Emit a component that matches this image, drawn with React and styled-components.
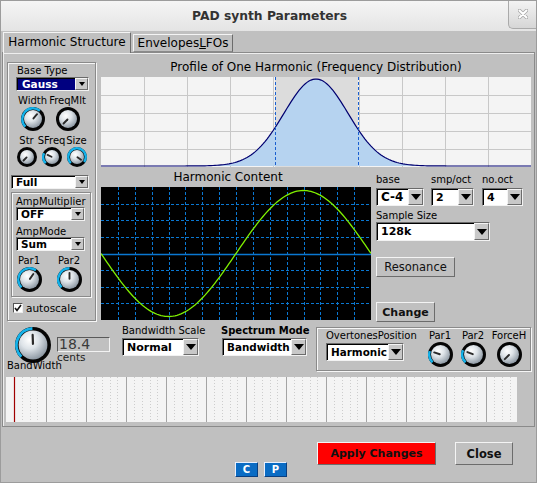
import React, { useId } from "react";
import styled, { createGlobalStyle } from "styled-components";

const GlobalStyle = createGlobalStyle`
  html, body { margin: 0; padding: 0; background: #c0c0c0; }
  body { font-family: "DejaVu Sans", "Liberation Sans", sans-serif; color: #000; }
  * { box-sizing: border-box; }
`;

const raised = `
  border: 1px solid;
  border-color: #f4f4f4 #6c6c6c #6c6c6c #f4f4f4;
`;

const engraved = `
  border: 1px solid #8a8a8a;
  box-shadow: inset 1px 1px 0 #f6f6f6, 1px 1px 0 #f6f6f6;
`;

const Window = styled.div`
  width: 537px;
  height: 483px;
  border: 1px solid #9c9c9c;
  background: #c0c0c0;
  display: flex;
  flex-direction: column;
  overflow: hidden;
`;

const TitleBar = styled.div`
  height: 30px;
  flex: none;
  display: grid;
  grid-template-columns: 1fr auto 1fr;
  align-items: center;
  background: linear-gradient(#f5f5f5, #e4e4e4);
`;

const Title = styled.div`
  grid-column: 2;
  font-weight: bold;
  font-size: 12.3px;
  color: #333;
  padding-left: 2px;
`;

const CloseBtn = styled.div`
  grid-column: 3;
  justify-self: end;
  align-self: start;
  width: 28px;
  height: 29px;
  margin-top: -1px;
  border-left: 1px solid #aaa;
  border-bottom: 1px solid #aaa;
  border-bottom-left-radius: 5px;
  background: linear-gradient(#f4f4f4, #d6d6d6);
  display: flex;
  align-items: center;
  justify-content: center;
`;

const Body = styled.div`
  flex: 1;
  display: flex;
  flex-direction: column;
  padding-top: 1px;
`;

const TabRow = styled.div`
  height: 20px;
  display: flex;
  align-items: flex-end;
  gap: 2px;
  padding-left: 2px;
`;

const Tab = styled.div`
  position: relative;
  z-index: 1;
  width: ${(p) => p.$w}px;
  height: ${(p) => (p.$active ? 21 : 18)}px;
  margin-bottom: ${(p) => (p.$active ? -1 : 0)}px;
  background: #c0c0c0;
  border-top: 1px solid #f4f4f4;
  border-left: 1px solid #f4f4f4;
  border-right: 1px solid #6c6c6c;
  border-bottom: ${(p) => (p.$active ? "none" : "1px solid #8a8a8a")};
  font-size: 12px;
  line-height: ${(p) => (p.$active ? 19 : 16)}px;
  text-align: center;
  white-space: nowrap;
`;

const Panel = styled.div`
  width: 533px;
  height: 375px;
  margin-left: 1px;
  border: 1px solid #8a8a8a;
  box-shadow: inset 1px 1px 0 #eee;
  padding: 4px 3px 0 4px;
  display: flex;
  flex-direction: column;
`;

const TopArea = styled.div`
  display: flex;
  height: 265px;
`;

const LeftGroup = styled.div`
  ${engraved}
  margin-top: 5px;
  width: 89px;
  height: 259px;
  display: flex;
  flex-direction: column;
`;

const SmallLabel = styled.div`
  font-size: 10px;
  line-height: 12px;
  white-space: nowrap;
  font-weight: ${(p) => (p.$bold ? "bold" : "normal")};
  margin-top: ${(p) => p.$mt || 0}px;
  margin-left: ${(p) => p.$ml || 0}px;
`;

const DropBox = styled.div`
  display: flex;
  flex: none;
  width: ${(p) => p.$w}px;
  height: ${(p) => p.$h}px;
  margin-top: ${(p) => p.$mt || 0}px;
  margin-left: ${(p) => p.$ml || 0}px;
  border: 1px solid;
  border-color: #6a6a6a #f2f2f2 #f2f2f2 #6a6a6a;
  background: #fff;
`;

const DropField = styled.div`
  flex: 1;
  min-width: 0;
  overflow: hidden;
  white-space: nowrap;
  border-top: 1px solid #000;
  border-left: 1px solid #000;
  background: ${(p) => (p.$selected ? "#000080" : "#fff")};
  color: ${(p) => (p.$selected ? "#fff" : "#000")};
  font-weight: bold;
  font-size: ${(p) => p.$fs}px;
  line-height: ${(p) => p.$h - 3}px;
  padding-left: ${(p) => (p.$selected ? 4 : 3)}px;
`;

const DropArrow = styled.div`
  width: ${(p) => p.$aw}px;
  flex: none;
  ${raised}
  background: #c8c8c8;
  display: flex;
  align-items: center;
  justify-content: center;
`;

const Triangle = styled.div`
  width: 0;
  height: 0;
  border-left: ${(p) => p.$s}px solid transparent;
  border-right: ${(p) => p.$s}px solid transparent;
  border-top: ${(p) => p.$s + 1}px solid #000;
`;

const KnobRow = styled.div`
  display: flex;
  margin-top: ${(p) => p.$mt || 0}px;
  padding-left: ${(p) => p.$pl || 0}px;
  gap: ${(p) => p.$gap || 0}px;
`;

const KnobCellBox = styled.div`
  width: ${(p) => p.$w}px;
  margin-left: ${(p) => p.$ml || 0}px;
  flex: none;
  display: flex;
  flex-direction: column;
  align-items: center;
`;

const KnobLabel = styled.div`
  font-size: 10px;
  line-height: 12px;
  white-space: nowrap;
`;

const AmpGroup = styled.div`
  ${engraved}
  margin-top: 3px;
  margin-left: 3px;
  width: 80px;
  height: 105px;
  display: flex;
  flex-direction: column;
`;

const CheckRow = styled.div`
  display: flex;
  align-items: center;
  margin-top: 5px;
  margin-left: 5px;
  height: 12px;
  font-size: 10.5px;
  gap: 3px;
`;

const CheckBox = styled.div`
  width: 10px;
  height: 10px;
  background: #fff;
  border: 1px solid;
  border-color: #555 #eee #eee #555;
  display: flex;
  align-items: center;
  justify-content: center;
`;

const RightArea = styled.div`
  margin-left: 5px;
  width: 430px;
  display: flex;
  flex-direction: column;
`;

const PlotTitle = styled.div`
  height: 20px;
  line-height: 20px;
  font-size: 12px;
  text-align: center;
  white-space: nowrap;
  padding-right: ${(p) => p.$pr || 0}px;
`;

const Svg = styled.svg`
  display: block;
  flex: none;
`;

const LowerRow = styled.div`
  display: flex;
`;

const ScopeCol = styled.div`
  width: 270px;
  display: flex;
  flex-direction: column;
`;

const Controls = styled.div`
  width: 155px;
  margin-left: 5px;
  display: flex;
  flex-direction: column;
`;

const OctRow = styled.div`
  display: flex;
  margin-top: 7px;
`;

const Field = styled.div`
  display: flex;
  flex-direction: column;
  width: ${(p) => p.$w}px;
  margin-left: ${(p) => p.$ml || 0}px;
  margin-top: ${(p) => p.$mt || 0}px;
  flex: none;
`;

const Button = styled.div`
  ${raised}
  width: ${(p) => p.$w}px;
  height: ${(p) => p.$h}px;
  margin-top: ${(p) => p.$mt || 0}px;
  margin-left: ${(p) => p.$ml || 0}px;
  background: ${(p) => p.$bg || "#c0c0c0"};
  font-size: ${(p) => p.$fs || 11}px;
  font-weight: ${(p) => (p.$bold ? "bold" : "normal")};
  color: ${(p) => p.$color || "#111"};
  display: flex;
  align-items: center;
  justify-content: center;
  white-space: nowrap;
  flex: none;
`;

const BottomRow = styled.div`
  display: flex;
  align-items: flex-start;
  height: 52px;
`;

const BWBlock = styled.div`
  display: grid;
  grid-template-columns: 52px 51px;
`;

const BWKnob = styled.div`
  justify-self: center;
  margin-top: 5px;
`;

const ValueCol = styled.div`
  margin-top: 15px;
  margin-left: -2px;
  width: 53px;
  display: flex;
  flex-direction: column;
`;

const ValueBox = styled.div`
  width: 53px;
  height: 15px;
  border: 1px solid;
  border-color: #5a5a5a #f2f2f2 #f2f2f2 #5a5a5a;
  font-size: 14px;
  line-height: 13px;
  color: #3a3a3a;
  padding-left: 1px;
`;

const Cents = styled.div`
  font-size: 10.5px;
  line-height: 11px;
  color: #222;
`;

const BWLabel = styled.div`
  grid-column: 1 / span 2;
  margin-top: -3px;
  font-size: 10px;
  line-height: 12px;
`;

const OvtGroup = styled.div`
  ${engraved}
  margin-left: 8px;
  margin-top: 5px;
  width: 215px;
  height: 44px;
  display: flex;
  align-items: flex-start;
  padding: 2px 0 0 9px;
`;

const Spectrum = styled.div`
  margin-top: 3px;
  margin-left: -1px;
`;

const Footer = styled.div`
  display: flex;
  align-items: flex-start;
  padding: 15px 0 0 234px;
`;

const CPGroup = styled.div`
  display: flex;
  gap: 6px;
  margin-top: 20px;
`;

const CPButton = styled.div`
  width: 23px;
  height: 15px;
  border: 1px solid;
  border-color: #e8f0ff #0a3f80 #0a3f80 #e8f0ff;
  background: #0a6cc4;
  color: #fff;
  font-weight: bold;
  font-size: 10px;
  display: flex;
  align-items: center;
  justify-content: center;
`;

const polar = (c, r, deg) => {
  const a = ((deg - 90) * Math.PI) / 180;
  return [c + r * Math.cos(a), c + r * Math.sin(a)];
};

function Knob({ size, angle }) {
  const gid = useId().replace(/:/g, "");
  const c = size / 2;
  const ring = size > 30 ? 3.6 : 3;
  const ra = c - ring * 0.42;
  const ri = c - ring;
  const [sx, sy] = polar(c, ra, -135);
  const [ex, ey] = polar(c, ra, angle);
  const large = angle + 135 > 180 ? 1 : 0;
  const [x1, y1] = polar(c, ri * 0.08, angle);
  const [x2, y2] = polar(c, ri * 0.7, angle);
  return (
    <Svg width={size} height={size} viewBox={`0 0 ${size} ${size}`}>
      <defs>
        <radialGradient id={gid} cx="38%" cy="32%" r="70%">
          <stop offset="0" stopColor="#ffffff" />
          <stop offset="0.45" stopColor="#dde3e8" />
          <stop offset="1" stopColor="#8e99a4" />
        </radialGradient>
      </defs>
      <circle cx={c} cy={c} r={c} fill="#050505" />
      {angle > -135 && (
        <path
          d={`M${sx} ${sy} A${ra} ${ra} 0 ${large} 1 ${ex} ${ey}`}
          stroke="#14b2ea"
          strokeWidth={ring * 0.8}
          fill="none"
        />
      )}
      <circle cx={c} cy={c} r={ri} fill={`url(#${gid})`} />
      <line x1={x1} y1={y1} x2={x2} y2={y2} stroke="#2a2a2a" strokeWidth={size > 30 ? 2.2 : 1.9} strokeLinecap="round" />
    </Svg>
  );
}

function KnobCell({ label, w, size, angle, ml }) {
  return (
    <KnobCellBox $w={w} $ml={ml}>
      <KnobLabel>{label}</KnobLabel>
      <Knob size={size} angle={angle} />
    </KnobCellBox>
  );
}

function Dropdown({ text, w, h, fs, selected, mt, ml, aw = 15 }) {
  return (
    <DropBox $w={w} $h={h} $mt={mt} $ml={ml}>
      <DropField $selected={selected} $fs={fs} $h={h}>
        {text}
      </DropField>
      <DropArrow $aw={h < 16 ? 13 : aw}>
        <Triangle $s={h < 16 ? 3.5 : 5} />
      </DropArrow>
    </DropBox>
  );
}

function ProfilePlot() {
  const W = 430;
  const H = 90;
  const pts = [];
  for (let x = 0; x <= W; x += 2) {
    const y = 89 - 87 * Math.exp(-((x - 215) ** 2) / (2 * 32 * 32));
    pts.push(`${x} ${y.toFixed(2)}`);
  }
  const cols = [];
  for (let i = 1; i < 10; i++) cols.push(i * 43);
  const rows = [18, 36, 54, 72];
  return (
    <Svg width={W} height={H}>
      <rect width={W} height={H} fill="#f4f4f4" />
      {cols.map((x) => (
        <line key={x} x1={x + 0.5} y1="0" x2={x + 0.5} y2={H} stroke="#c8c8c8" />
      ))}
      {rows.map((y) => (
        <line key={y} x1="0" y1={y + 0.5} x2={W} y2={y + 0.5} stroke="#c8c8c8" />
      ))}
      <rect x="174" y="0" width="83" height={H} fill="#dcdcdc" />
      <path d={`M0 89 L${pts.join(" L")} L${W} 89 Z`} fill="#b6d3f0" />
      <path d={`M${pts.join(" L")}`} fill="none" stroke="#000070" strokeWidth="1.2" />
      <line x1="174.5" y1="0" x2="174.5" y2={H} stroke="#1a5fd0" strokeDasharray="3 2" />
      <line x1="257.5" y1="0" x2="257.5" y2={H} stroke="#1a5fd0" strokeDasharray="3 2" />
    </Svg>
  );
}

function Scope() {
  const W = 270;
  const H = 133;
  const vx = [];
  for (let i = 1; i < 16; i++) vx.push(Math.round((W * i) / 16) + 0.5);
  const hy = [];
  for (let j = 1; j < 8; j++) hy.push({ y: Math.round((H * j) / 8) + 0.5, solid: j === 4 });
  const pts = [];
  for (let x = 0; x <= W; x += 2) {
    const y = 66.5 + 63 * Math.sin((2 * Math.PI * x) / W);
    pts.push(`${x} ${y.toFixed(2)}`);
  }
  return (
    <Svg width={W} height={H}>
      <rect width={W} height={H} fill="#000" />
      {vx.map((x) => (
        <line key={x} x1={x} y1="0" x2={x} y2={H} stroke="#0a78d2" strokeDasharray="3 2" />
      ))}
      {hy.map(({ y, solid }) => (
        <line key={y} x1="0" y1={y} x2={W} y2={y} stroke="#0a78d2" strokeDasharray={solid ? undefined : "3 2"} strokeWidth={solid ? 1.3 : 1} />
      ))}
      <path d={`M${pts.join(" L")}`} fill="none" stroke="#80f000" strokeWidth="1.3" />
    </Svg>
  );
}

function SpectrumStrip() {
  const W = 511;
  const H = 45;
  const majors = [];
  for (let x = 40; x < W; x += 40) majors.push(x);
  const minors = [];
  for (let x = 0; x < W; x += 40) [8, 16, 24, 31].forEach((o) => x + o < W && minors.push(x + o));
  return (
    <Svg width={W} height={H}>
      <rect width={W} height={H} fill="#f4f4f4" />
      {minors.map((x) => (
        <line key={"m" + x} x1={x + 0.5} y1="0" x2={x + 0.5} y2={H} stroke="#cdcdcd" strokeDasharray="1 2" />
      ))}
      {majors.map((x) => (
        <line key={x} x1={x + 0.5} y1="0" x2={x + 0.5} y2={H} stroke="#a4a4a4" />
      ))}
      <line x1="8.5" y1="0" x2="8.5" y2={H} stroke="#a00000" strokeWidth="1.2" />
    </Svg>
  );
}

export default function App() {
  return (
    <>
      <GlobalStyle />
      <Window>
        <TitleBar>
          <Title>PAD synth Parameters</Title>
          <CloseBtn>
            <Svg width="10" height="10" viewBox="0 0 10 10">
              <path d="M1.5 1.5 L8.5 8.5 M8.5 1.5 L1.5 8.5" stroke="#a8a8a8" strokeWidth="3.6" strokeLinecap="round" />
              <path d="M1.5 1.5 L8.5 8.5 M8.5 1.5 L1.5 8.5" stroke="#fff" strokeWidth="2" strokeLinecap="round" />
            </Svg>
          </CloseBtn>
        </TitleBar>
        <Body>
          <TabRow>
            <Tab $active $w={128}>Harmonic Structure</Tab>
            <Tab $w={100}>
              Envelopes<u>L</u>FOs
            </Tab>
          </TabRow>
          <Panel>
            <TopArea>
              <LeftGroup>
                <SmallLabel $mt={2} $ml={9}>Base Type</SmallLabel>
                <Dropdown text="Gauss" selected w={73} h={14} fs={10.5} ml={8} />
                <KnobRow $mt={4} $pl={7}>
                  <KnobCell label="Width" w={35} size={24} angle={40} />
                  <KnobCell label="FreqMlt" w={35} size={24} angle={-135} />
                </KnobRow>
                <KnobRow $mt={4} $pl={6}>
                  <KnobCell label="Str" w={25} size={20} angle={-135} />
                  <KnobCell label="SFreq" w={25} size={20} angle={-65} />
                  <KnobCell label="Size" w={25} size={20} angle={125} />
                </KnobRow>
                <Dropdown text="Full" w={78} h={14} fs={10.5} mt={8} ml={3} />
                <AmpGroup>
                  <SmallLabel $mt={3} $ml={4}>AmpMultiplier</SmallLabel>
                  <Dropdown text="OFF" w={69} h={14} fs={10.5} mt={-1} ml={4} />
                  <SmallLabel $mt={5} $ml={4}>AmpMode</SmallLabel>
                  <Dropdown text="Sum" w={69} h={14} fs={10.5} mt={-1} ml={4} />
                  <KnobRow $mt={4} $pl={2} $gap={10}>
                    <KnobCell label="Par1" w={30} size={25} angle={35} />
                    <KnobCell label="Par2" w={30} size={25} angle={0} />
                  </KnobRow>
                </AmpGroup>
                <CheckRow>
                  <CheckBox>
                    <Svg width="8" height="8" viewBox="0 0 8 8">
                      <path d="M1 4 L3 6.5 L7 1" stroke="#111" strokeWidth="1.6" fill="none" />
                    </Svg>
                  </CheckBox>
                  autoscale
                </CheckRow>
              </LeftGroup>
              <RightArea>
                <PlotTitle>Profile of One Harmonic (Frequency Distribution)</PlotTitle>
                <ProfilePlot />
                <LowerRow>
                  <ScopeCol>
                    <PlotTitle $pr={16}>Harmonic Content</PlotTitle>
                    <Scope />
                  </ScopeCol>
                  <Controls>
                    <OctRow>
                      <Field $w={48}>
                        <SmallLabel>base</SmallLabel>
                        <Dropdown text="C-4" w={48} h={18} fs={12} mt={2} />
                      </Field>
                      <Field $w={43} $ml={7}>
                        <SmallLabel>smp/oct</SmallLabel>
                        <Dropdown text="2" w={43} h={18} fs={11} mt={2} />
                      </Field>
                      <Field $w={41} $ml={8}>
                        <SmallLabel>no.oct</SmallLabel>
                        <Dropdown text="4" w={41} h={18} fs={11} mt={2} />
                      </Field>
                    </OctRow>
                    <SmallLabel $mt={4}>Sample Size</SmallLabel>
                    <Dropdown text="128k" w={114} h={19} fs={11} />
                    <Button $w={79} $h={20} $mt={16} $fs={11.5}>
                      Resonance
                    </Button>
                    <Button $w={59} $h={20} $mt={25} $bold>
                      Change
                    </Button>
                  </Controls>
                </LowerRow>
              </RightArea>
            </TopArea>
            <BottomRow>
              <BWBlock>
                <BWKnob>
                  <Knob size={36} angle={-2} />
                </BWKnob>
                <ValueCol>
                  <ValueBox>18.4</ValueBox>
                  <Cents>cents</Cents>
                </ValueCol>
                <BWLabel>BandWidth</BWLabel>
              </BWBlock>
              <Field $w={81} $ml={12} $mt={3}>
                <SmallLabel>Bandwidth Scale</SmallLabel>
                <Dropdown text="Normal" w={77} h={18} fs={11} mt={1} />
              </Field>
              <Field $w={87} $ml={18} $mt={3}>
                <SmallLabel $bold>Spectrum Mode</SmallLabel>
                <Dropdown text="Bandwidth" w={85} h={18} fs={10.4} mt={1} ml={1} />
              </Field>
              <OvtGroup>
                <Field $w={89}>
                  <SmallLabel>OvertonesPosition</SmallLabel>
                  <Dropdown text="Harmonic" w={78} h={18} fs={10.4} mt={1} />
                </Field>
                <KnobCell label="Par1" w={30} size={25} angle={-72} ml={10} />
                <KnobCell label="Par2" w={30} size={25} angle={-68} ml={3} />
                <KnobCell label="ForceH" w={30} size={25} angle={-135} ml={6} />
              </OvtGroup>
            </BottomRow>
            <Spectrum>
              <SpectrumStrip />
            </Spectrum>
          </Panel>
          <Footer>
            <CPGroup>
              <CPButton>C</CPButton>
              <CPButton>P</CPButton>
            </CPGroup>
            <Button $w={119} $h={23} $ml={30} $bg="#ff0000" $bold $fs={11}>
              Apply Changes
            </Button>
            <Button $w={58} $h={23} $ml={19} $bold $fs={11.5}>
              Close
            </Button>
          </Footer>
        </Body>
      </Window>
    </>
  );
}
